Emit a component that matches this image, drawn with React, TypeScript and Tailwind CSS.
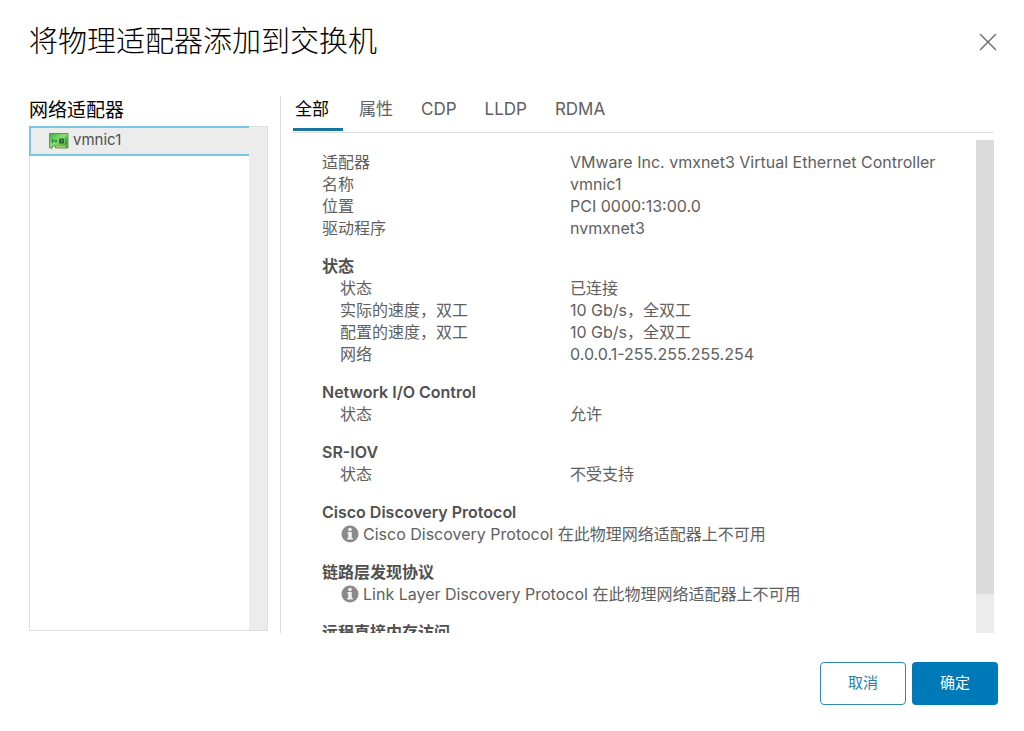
import { useState } from "react";

type Row = { label: string; value: string };
type Section = { title?: string; rows?: Row[]; note?: string };

const tabs = ["全部", "属性", "CDP", "LLDP", "RDMA"];

const sections: Section[] = [
  {
    rows: [
      { label: "适配器", value: "VMware Inc. vmxnet3 Virtual Ethernet Controller" },
      { label: "名称", value: "vmnic1" },
      { label: "位置", value: "PCI 0000:13:00.0" },
      { label: "驱动程序", value: "nvmxnet3" },
    ],
  },
  {
    title: "状态",
    rows: [
      { label: "状态", value: "已连接" },
      { label: "实际的速度，双工", value: "10 Gb/s，全双工" },
      { label: "配置的速度，双工", value: "10 Gb/s，全双工" },
      { label: "网络", value: "0.0.0.1-255.255.255.254" },
    ],
  },
  { title: "Network I/O Control", rows: [{ label: "状态", value: "允许" }] },
  { title: "SR-IOV", rows: [{ label: "状态", value: "不受支持" }] },
  { title: "Cisco Discovery Protocol", note: "Cisco Discovery Protocol 在此物理网络适配器上不可用" },
  { title: "链路层发现协议", note: "Link Layer Discovery Protocol 在此物理网络适配器上不可用" },
  { title: "远程直接内存访问" },
];

function NicIcon() {
  return (
    <svg width="20" height="16" viewBox="0 0 20 16" aria-hidden="true">
      <defs>
        <linearGradient id="board" x1="0" y1="0" x2="1" y2="1">
          <stop offset="0" stopColor="#35ae3c" />
          <stop offset="0.45" stopColor="#8add72" />
          <stop offset="1" stopColor="#3a9a3c" />
        </linearGradient>
      </defs>
      <path d="M0.500 0.500h18.500v14.500h-12.500v-2h-3v2h-3z" fill="url(#board)" stroke="#5a9a58" />
      <path d="M7.500 13h9v1.500h-9z" fill="#b9c45a" />
      <path d="M3.500 6v4M3.500 8h5M7 6.500v3" stroke="#2c7a38" fill="none" />
      <rect x="10" y="5.500" width="5" height="5" fill="#2a6a34" />
      <rect x="12" y="7.500" width="1" height="1" fill="#9ad08c" />
      <path d="M17 4.500v7" stroke="#2f8038" />
    </svg>
  );
}

function InfoIcon() {
  return (
    <svg width="18" height="18" viewBox="0 0 18 18" className="shrink-0" aria-hidden="true">
      <circle cx="9" cy="9" r="8.500" fill="#8a8a8a" />
      <circle cx="9" cy="4.500" r="1.800" fill="#f2f2f2" />
      <path d="M6.500 7h4.300v6h1v1.500h-5.600v-1.500h1v-4.500h-0.700z" fill="#f2f2f2" />
    </svg>
  );
}

function Details() {
  return (
    <div className="space-y-4 pt-[11px] pb-6 pl-[29px] text-base leading-[22px] text-[#606060]">
      {sections.map((s, i) => (
        <section key={i}>
          {s.title && <h3 className="font-semibold text-[#505050]">{s.title}</h3>}
          {s.rows && (
            <dl>
              {s.rows.map((r) => (
                <div key={r.label} className="flex">
                  <dt className={s.title ? "w-[248px] shrink-0 pl-[18px]" : "w-[248px] shrink-0"}>{r.label}</dt>
                  <dd>{r.value}</dd>
                </div>
              ))}
            </dl>
          )}
          {s.note && (
            <p className="flex items-center gap-1 pl-[19px]">
              <InfoIcon />
              {s.note}
            </p>
          )}
        </section>
      ))}
    </div>
  );
}

export default function App() {
  const [active, setActive] = useState("全部");
  return (
    <div
      role="dialog"
      aria-labelledby="dialog-title"
      className="flex h-screen flex-col bg-white pr-[26px] pb-[26px] pl-[29px] font-['Inter','Noto_Sans_CJK_SC',sans-serif]"
    >
      <header className="flex h-24 shrink-0 items-start justify-between pt-[21px]">
        <h1 id="dialog-title" className="text-[29px] leading-[42px] font-light text-black">
          将物理适配器添加到交换机
        </h1>
        <button type="button" aria-label="关闭" className="mt-[11px] flex size-5 items-center justify-center">
          <svg width="18" height="18" viewBox="0 0 18 18" fill="none" stroke="#737373" strokeWidth="1.5" strokeLinecap="round" aria-hidden="true">
            <path d="M1.500 1.500l15 15M16.500 1.500l-15 15" />
          </svg>
        </button>
      </header>

      <main className="flex min-h-0 flex-1 pr-1">
        <aside className="flex w-[239px] shrink-0 flex-col pb-0.5">
          <h2 className="h-[30px] text-[19px] leading-[30px] text-black">网络适配器</h2>
          <div className="flex min-h-0 flex-1 border border-[#dedede]">
            <ul className="-mt-px -ml-px min-w-0 flex-1">
              <li>
                <button
                  type="button"
                  className="flex h-[30px] w-full items-center gap-1 border-y-2 border-l-2 border-[#79c6e2] bg-[#ececec] pl-[18px] text-[15px] text-[#505050]"
                >
                  <NicIcon />
                  <span className="pb-0.5">vmnic1</span>
                </button>
              </li>
            </ul>
            <div className="w-[18px] bg-[#ececec]" />
          </div>
        </aside>

        <div className="ml-3 flex min-w-0 flex-1 flex-col border-l border-[#dedede] pl-3">
          <div role="tablist" className="flex h-[37px] shrink-0 gap-7 border-b border-[#dedede] text-[17px]">
            {tabs.map((t) => (
              <button
                key={t}
                type="button"
                role="tab"
                aria-selected={t === active}
                onClick={() => setActive(t)}
                className={
                  t === active
                    ? "-mr-3 h-[35px] border-b-3 border-[#1a74a0] pr-3.5 pb-1 pl-0.5 text-black"
                    : "h-[35px] border-b-3 border-transparent pb-1 text-[#606060]"
                }
              >
                {t}
              </button>
            ))}
          </div>
          <div className="mt-[7px] flex min-h-0 flex-1">
            <div className="min-w-0 flex-1 overflow-y-auto [scrollbar-width:none]">
              <Details />
            </div>
            <div className="w-[18px] bg-[#ececec]">
              <div className="h-[92%] bg-[#dbdbdb]" />
            </div>
          </div>
        </div>
      </main>

      <footer className="mt-[29px] flex shrink-0 justify-end gap-1.5 text-[15px]">
        <button type="button" className="h-[43px] w-[86px] rounded-sm border border-[#2f87ab] text-[#2a7fa3]">
          取消
        </button>
        <button type="button" className="h-[43px] w-[86px] rounded-sm bg-[#0079b8] text-white">
          确定
        </button>
      </footer>
    </div>
  );
}
